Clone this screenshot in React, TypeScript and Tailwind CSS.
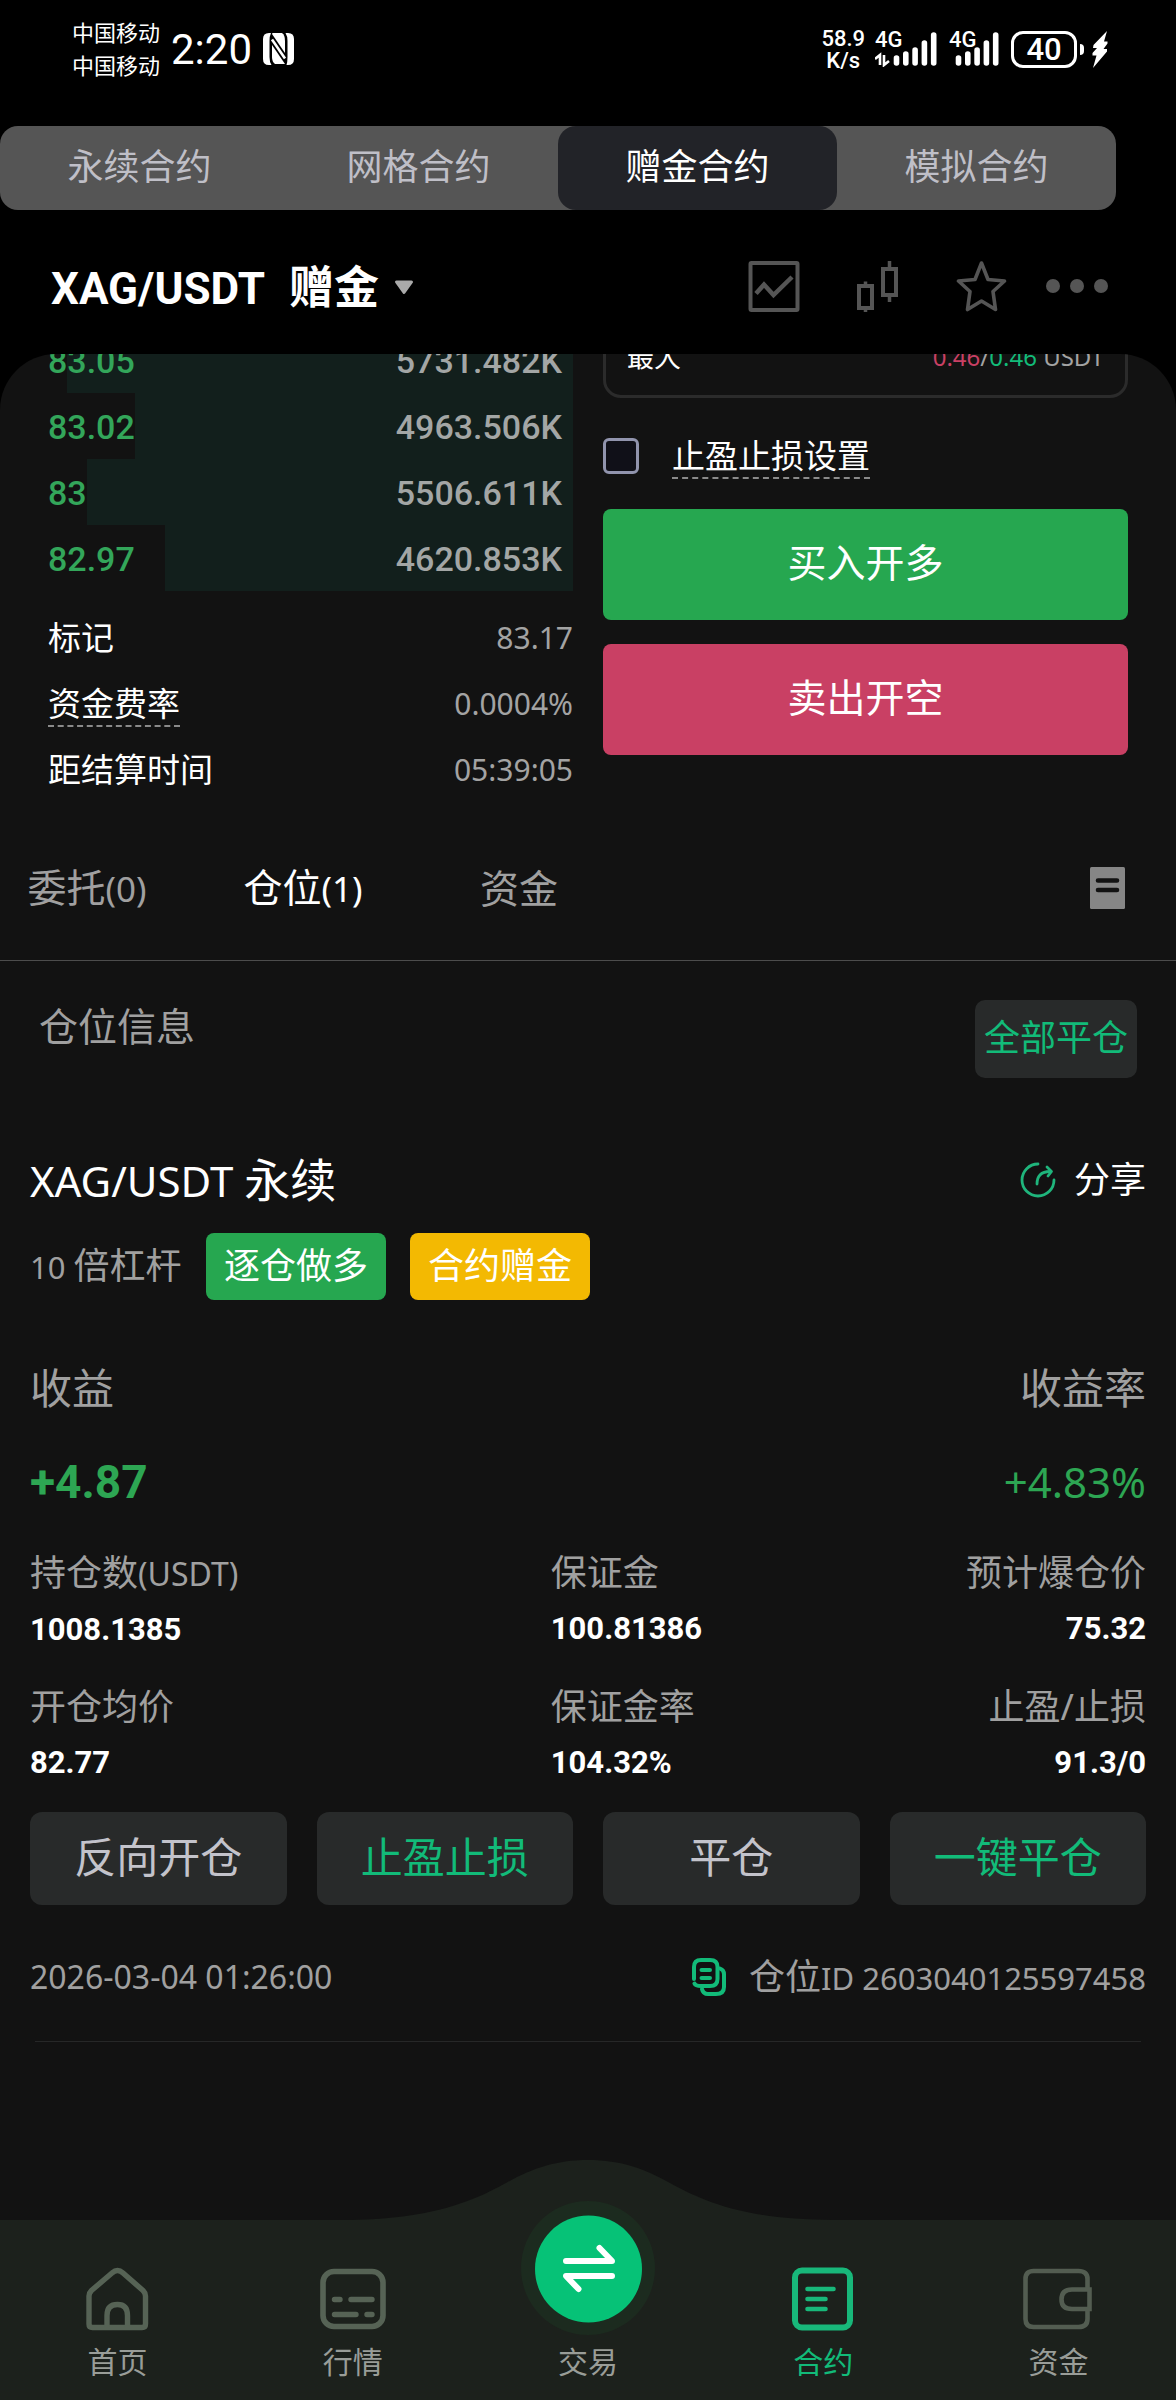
import React from "react";

const modes = ["永续合约", "网格合约", "赠金合约", "模拟合约"];

const bids = [
  { price: "83.05", size: "5731.482K", depth: 506 },
  { price: "83.02", size: "4963.506K", depth: 438 },
  { price: "83", size: "5506.611K", depth: 486 },
  { price: "82.97", size: "4620.853K", depth: 408 },
];
const MAX_DEPTH = 525;

const actions = [
  { label: "反向开仓", accent: false },
  { label: "止盈止损", accent: true },
  { label: "平仓", accent: false },
  { label: "一键平仓", accent: true },
];

function Signal({ traffic }: { traffic?: boolean }) {
  const tops = [23, 19, 15, 8, 0];
  return (
    <div className={traffic ? "relative h-[36px] w-[62px]" : "relative h-[36px] w-[50px]"}>
      <span className="absolute -top-[3px] left-0 font-[Roboto] text-[22px] leading-[24px] font-medium">4G</span>
      <svg className="absolute right-0 bottom-0" width="62" height="36" viewBox="0 0 62 36" aria-hidden="true">
        {tops.map((top, i) => (
          <path key={i} d={`M${21.5 + i * 9.3} ${top + 4}V32`} stroke="#fff" strokeWidth="5.6" strokeLinecap="round" />
        ))}
        {traffic && (
          <path d="M0 28l5-4v10M14 30l-5 4V24" stroke="#fff" strokeWidth="2.6" fill="none" />
        )}
      </svg>
    </div>
  );
}

function StatusBar() {
  return (
    <div className="flex h-[98px] items-center justify-between pr-[68px] pl-[72px]">
      <div className="flex items-center">
        <div className="pb-[1px] text-[22px] leading-[33px]">
          <div>中国移动</div>
          <div>中国移动</div>
        </div>
        <span className="ml-[11px] pt-[1px] font-[Roboto] text-[42px] leading-[48px]">2:20</span>
        <svg className="ml-[11px]" width="31" height="32" viewBox="0 0 31 32" aria-label="NFC">
          <path d="M6 0H8Q6.500 3 6.500 8V24Q6.500 29 8.500 32H6Q0 32 0 26V6Q0 0 6 0Z" fill="#fff" />
          <path d="M25 0H22.500Q24.500 3 24.500 8V24Q24.500 29 23.500 32H25Q31 32 31 26V6Q31 0 25 0Z" fill="#fff" />
          <path d="M9.500 0H19Q22 2 22 8V20L9 1Z" fill="#fff" />
          <path d="M9 12L22 31H12Q9 29 9 24Z" fill="#fff" />
          <path d="M9 6.500L22 25.500" stroke="#fff" strokeWidth="2.600" />
        </svg>
      </div>
      <div className="flex items-center">
        <div className="mr-[10px] pt-[2px] text-center font-[Roboto] text-[22px] leading-[22px] font-medium">
          <div>58.9</div>
          <div>K/s</div>
        </div>
        <Signal traffic />
        <div className="ml-[12px]">
          <Signal />
        </div>
        <div className="ml-[12px] flex h-[37px] w-[66px] items-center justify-center rounded-[12px] border-3 border-white font-[Roboto] text-[31px] leading-none font-medium">
          40
        </div>
        <div className="ml-[3px] h-[11px] w-[4px] rounded-r-[4px] bg-white" />
        <svg className="ml-[8px]" width="16" height="37" viewBox="0 0 16 37" aria-label="充电中">
          <path d="M15 0L1.500 14L1 17H5L0.500 22V24.500H4.500L1 37L15 20.500V18H11.500L15.500 12.500V10.500H12Z" fill="#fff" />
        </svg>
      </div>
    </div>
  );
}

function PairHeader() {
  return (
    <div className="flex h-[144px] items-center justify-between pt-[10px] pr-[68px] pl-[51px]">
      <button className="flex items-center">
        <span className="pt-[3px] font-[Roboto] text-[44px] leading-[56px] font-bold">XAG/USDT</span>
        <span className="ml-[24px] text-[45px] leading-[56px] font-bold">赠金</span>
        <svg className="ml-[15px]" width="20" height="15" viewBox="0 0 20 15" aria-hidden="true">
          <path d="M2.500 2H17.500L10 12.500Z" fill="#aaa" stroke="#aaa" strokeWidth="3" strokeLinejoin="round" />
        </svg>
      </button>
      <div className="flex items-center text-[#555555]">
        <div className="flex gap-[52px]">
          <button aria-label="走势">
            <svg width="52" height="52" viewBox="0 0 52 52" fill="none" stroke="currentColor" strokeWidth="4">
              <rect x="2.500" y="2" width="47" height="47" rx="1" />
              <path d="M8 32.500L16 23.500L25.500 34L44 16" strokeWidth="4.500" />
            </svg>
          </button>
          <button aria-label="K线">
            <svg width="52" height="52" viewBox="0 0 52 52" fill="none" stroke="currentColor" strokeWidth="4">
              <rect x="7" y="25" width="13" height="22" />
              <rect x="31" y="8" width="13" height="26" />
              <path d="M13.500 20.500V24M13.500 47V51M37.500 0V7M37.500 35V41" strokeWidth="3.500" />
            </svg>
          </button>
          <button aria-label="收藏">
            <svg width="52" height="52" viewBox="0 0 52 52" fill="none" stroke="currentColor" strokeWidth="3.600" strokeLinejoin="round">
              <path d="M25.500 2L32 18.500L48.500 20L37 30.500L39.500 48.500L25.500 40L11.500 48.500L14 30.500L2.500 20L19 18.500Z" />
            </svg>
          </button>
        </div>
        <button aria-label="更多" className="ml-[38px]">
          <svg width="62" height="16" viewBox="0 0 62 16" fill="currentColor">
            <circle cx="7" cy="7" r="7" />
            <circle cx="31" cy="7" r="7" />
            <circle cx="55" cy="7" r="7" />
          </svg>
        </button>
      </div>
    </div>
  );
}

function OrderBook() {
  return (
    <div className="-mt-[27px] min-w-0 flex-1">
      <table className="w-full border-collapse font-[Roboto] text-[34px] leading-[64px] font-medium">
        <tbody>
          {bids.map((b) => {
            const pct = (b.depth / MAX_DEPTH) * 100;
            return (
              <tr
                key={b.price}
                className="h-[66px]"
                style={{ background: `linear-gradient(to left, #121f1c ${pct}%, transparent ${pct}%)` }}
              >
                <td className="p-0 pt-[2px] text-left text-[#33a65a]">{b.price}</td>
                <td className="p-0 pt-[2px] pr-[11px] text-right text-[#a3a6a5]">{b.size}</td>
              </tr>
            );
          })}
        </tbody>
      </table>
      <dl className="pt-[14px] text-[33px] leading-[36px]">
        <div className="flex h-[66px] items-start justify-between pt-[15px]">
          <dt>标记</dt>
          <dd className="text-[30px] text-[#a3a3a3]">83.17</dd>
        </div>
        <div className="flex h-[66px] items-start justify-between pt-[15px]">
          <dt className="border-b-2 border-dashed border-[#8a8a8a] pb-[3px]">资金费率</dt>
          <dd className="text-[30px] text-[#a3a3a3]">0.0004%</dd>
        </div>
        <div className="flex h-[66px] items-start justify-between pt-[15px]">
          <dt>距结算时间</dt>
          <dd className="text-[30px] text-[#a3a3a3]">05:39:05</dd>
        </div>
      </dl>
    </div>
  );
}

function TradeForm() {
  return (
    <form className="-mt-[40px] min-w-0 flex-1" onSubmit={(e) => e.preventDefault()}>
      <div className="flex h-[84px] items-center justify-between rounded-[18px] border-3 border-[#2b2b2b] px-[21px] pt-[2px] leading-[32px]">
        <span className="text-[27px]">最大</span>
        <span className="text-[24px] text-[#a3a3a3]">
          <span className="text-[#c94064]">0.46</span>/<span className="text-[#12bb79]">0.46</span> USDT
        </span>
      </div>
      <div className="mt-[40px] flex h-[71px] items-start">
        <input
          id="tpsl"
          type="checkbox"
          className="size-[36px] appearance-none rounded-[6px] border-3 border-[#9194ad] bg-[#101018] checked:bg-[#9194ad]"
        />
        <label
          htmlFor="tpsl"
          className="ml-[33px] border-b-2 border-dashed border-[#8a8a8a] pb-[3px] text-[33px] leading-[36px]"
        >
          止盈止损设置
        </label>
      </div>
      <button className="block h-[111px] w-full rounded-[8px] bg-[#26a750] pb-[4px] text-[39px]">买入开多</button>
      <button className="mt-[24px] block h-[111px] w-full rounded-[8px] bg-[#c94064] pb-[4px] text-[39px]">
        卖出开空
      </button>
    </form>
  );
}

function Tabs() {
  return (
    <div className="flex h-[158px] items-center justify-between border-b border-[#4c4c4c] pt-[13px] pr-[51px]">
      <div className="-ml-[21px] flex text-[39px] leading-[48px]">
        <button className="w-[216px] text-[#a0a0a0]">
          委托<span className="text-[35px]">(0)</span>
        </button>
        <button className="w-[216px] text-white">
          仓位<span className="text-[35px]">(1)</span>
        </button>
        <button className="w-[216px] text-[#a0a0a0]">资金</button>
      </div>
      <button aria-label="历史记录">
        <svg width="35" height="42" viewBox="0 0 35 42">
          <rect width="35" height="42" rx="1.500" fill="#868686" />
          <path d="M8 13.500H27M8 23H27" stroke="#121212" strokeWidth="4.600" strokeLinecap="round" />
        </svg>
      </button>
    </div>
  );
}

function Metric({ label, unit, value, end }: { label: string; unit?: string; value: string; end?: boolean }) {
  return (
    <div className={end ? "text-right" : ""}>
      <dt className="text-[36px] leading-[44px] whitespace-nowrap text-[#a0a0a0]">
        {label}
        {unit && <span className="text-[32px]">{unit}</span>}
      </dt>
      <dd className="mt-[12px] font-[Roboto] text-[31px] leading-[44px] font-bold text-white">{value}</dd>
    </div>
  );
}

function Position() {
  return (
    <article className="mt-[74px] px-[30px]">
      <div className="flex h-[56px] items-center justify-between">
        <h2 className="flex items-baseline gap-[11px] text-[46px] leading-[56px]">
          <span className="text-[42px]">XAG/USDT</span>
          <span>永续</span>
        </h2>
        <button className="flex items-center text-[36px] leading-[48px]">
          <svg className="mr-[18px]" width="36" height="36" viewBox="0 0 36 36" fill="none" stroke="#1fb57c" strokeWidth="2.800" strokeLinecap="round" strokeLinejoin="round">
            <path d="M18 2A16 16 0 1 0 34 18" />
            <path d="M17 22C17 14 21 9.500 30 9.500" />
            <path d="M27 5L31.500 9.500L28 14" />
          </svg>
          分享
        </button>
      </div>
      <div className="mt-[25px] flex h-[67px] items-stretch text-[36px] leading-[65px]">
        <span className="w-[176px] whitespace-nowrap text-[#a0a0a0]">
          <span className="text-[31px]">10 </span>倍杠杆
        </span>
        <span className="rounded-[8px] bg-[#26a750] px-[18px]">逐仓做多</span>
        <span className="ml-[24px] rounded-[8px] bg-[#f3b902] px-[18px]">合约赠金</span>
      </div>
      <dl className="mt-[63px] flex justify-between leading-[50px]">
        <div>
          <dt className="text-[42px] text-[#a0a0a0]">收益</dt>
          <dd className="mt-[44px] font-[Roboto] text-[46px] font-bold text-[#2da653]">+4.87</dd>
        </div>
        <div className="text-right">
          <dt className="text-[42px] text-[#a0a0a0]">收益率</dt>
          <dd className="mt-[44px] text-[42px] text-[#2da653]">+4.83%</dd>
        </div>
      </dl>
      <dl className="mt-[44px] grid grid-cols-[14fr_8fr_8fr] gap-y-[33px]">
        <Metric label="持仓数" unit="(USDT)" value="1008.1385" />
        <Metric label="保证金" value="100.81386" />
        <Metric label="预计爆仓价" value="75.32" end />
        <Metric label="开仓均价" value="82.77" />
        <Metric label="保证金率" value="104.32%" />
        <Metric label="止盈/止损" value="91.3/0" end />
      </dl>
      <div className="mt-[27px] grid grid-cols-4 gap-[30px]">
        {actions.map((a) => (
          <button
            key={a.label}
            className={
              a.accent
                ? "h-[93px] rounded-[12px] bg-[#282a2a] pb-[5px] text-[42px] text-[#12bb79]"
                : "h-[93px] rounded-[12px] bg-[#282a2a] pb-[5px] text-[42px] text-[#c3c3cb]"
            }
          >
            {a.label}
          </button>
        ))}
      </div>
      <div className="mt-[50px] flex h-[44px] items-center justify-between text-[32px] leading-[44px] text-[#a0a0a0]">
        <time>2026-03-04 01:26:00</time>
        <div className="flex items-center text-[31px]">
          <button aria-label="复制">
            <svg width="34" height="38" viewBox="0 0 34 38" fill="none" stroke="#12bb79" strokeWidth="4" strokeLinecap="round">
              <path d="M2 21V9Q2 2 9 2H18Q25.500 2 25.500 9V21Q25.500 28 18 28H9Q3.500 28 2.500 25.500" />
              <path d="M10 31Q11 36 16 36H24Q32 36 32 29V16Q32 12 28 10.500" />
              <path d="M9.500 12H18M9.500 20H18" />
            </svg>
          </button>
          <span className="ml-[23px]">
            <span className="text-[36px]">仓位</span>ID 2603040125597458
          </span>
        </div>
      </div>
      <hr className="mx-[5px] mt-[42px] border-[#262727]" />
    </article>
  );
}

function NavItem({ label, active, children }: { label: string; active?: boolean; children?: React.ReactNode }) {
  return (
    <a
      href="#"
      className={
        active
          ? "flex flex-1 flex-col items-center pt-[46px] text-[#12bb79]"
          : "flex flex-1 flex-col items-center pt-[46px] text-[#999d98]"
      }
    >
      <span className="relative flex h-[68px] w-[72px] justify-center">{children}</span>
      <span className="mt-[8px] text-[30px] leading-[39px]">{label}</span>
    </a>
  );
}

function BottomNav() {
  return (
    <nav className="relative flex h-[180px] bg-[#1c211c]">
      <svg className="absolute bottom-full left-1/2 -translate-x-1/2" width="490" height="60" viewBox="0 0 490 60" aria-hidden="true">
        <path d="M0 60C95 60 137 37 163 23C188 9 212 0 245 0C278 0 302 9 327 23C353 37 395 60 490 60Z" fill="#1c211c" />
      </svg>
      <NavItem label="首页">
        <svg width="72" height="68" viewBox="0 0 72 68" fill="none" stroke="#566355" strokeWidth="5.400">
          <path d="M30 7Q35.500 2 41 7L61 24.500Q63.500 27 63.500 30V58Q63.500 61.500 60 61.500H10.500Q7 61.500 7 58V30Q7 27 9.500 24.500Z" strokeLinejoin="round" />
          <path d="M25 61V49.500Q25 38.500 35.500 38.500Q45.500 38.500 45.500 49.500V61" />
        </svg>
      </NavItem>
      <NavItem label="行情">
        <svg width="72" height="68" viewBox="0 0 72 68" fill="none" stroke="#566355" strokeWidth="5.600" strokeLinecap="round">
          <rect x="6" y="5.500" width="60" height="55" rx="11" />
          <path d="M17.500 33.500H23M34 33.500H55M17.500 48.500H39M50 48.500H55" strokeWidth="5.400" />
        </svg>
      </NavItem>
      <NavItem label="交易">
        <svg className="absolute -top-[65px] -left-[31px]" width="134" height="134" viewBox="0 0 134 134" fill="none">
          <circle cx="67" cy="67" r="67" fill="#1c2b1f" />
          <circle cx="67.500" cy="68" r="53.500" fill="#06c277" />
          <path d="M45 60H91L78.500 47M91 75H45L57.500 88" stroke="#fff" strokeWidth="6" strokeLinecap="round" strokeLinejoin="round" />
        </svg>
      </NavItem>
      <NavItem label="合约" active>
        <svg width="72" height="68" viewBox="0 0 72 68" fill="none" stroke="#18b87a" strokeWidth="6" strokeLinecap="round">
          <rect x="8" y="4.500" width="55" height="57" rx="7" />
          <path d="M20.500 23H46.500M20.500 33H38.500M20.500 43H38.500" strokeWidth="4.600" />
        </svg>
      </NavItem>
      <NavItem label="资金">
        <svg width="72" height="68" viewBox="0 0 72 68" fill="none" stroke="#535d51" strokeWidth="4.600">
          <path d="M65.500 24V13Q65.500 5 56.500 5H11.500Q3.500 5 3.500 13V53Q3.500 61 11.500 61H56.500Q65.500 61 65.500 53V43" />
          <path d="M67.500 23.500H50Q39.500 23.500 39.500 33.500Q39.500 43 50 43H67.500Z" />
        </svg>
      </NavItem>
    </nav>
  );
}

export default function App() {
  return (
    <div className="flex min-h-screen flex-col overflow-hidden bg-black font-['Noto_Sans','Noto_Sans_CJK_SC',sans-serif] text-white">
      <header>
        <StatusBar />
        <div className="mt-[28px] mr-[60px] flex h-[84px] rounded-[18px] bg-[#555555]">
          {modes.map((m) => (
            <button
              key={m}
              className={
                m === "赠金合约"
                  ? "flex-1 rounded-[18px] bg-[#222328] pb-[3px] text-[36px] text-white"
                  : "flex-1 pb-[3px] text-[36px] text-[#bfbfc7]"
              }
            >
              {m}
            </button>
          ))}
        </div>
        <PairHeader />
      </header>
      <main className="flex-1 overflow-hidden rounded-t-[56px] bg-[#121212]">
        <section className="flex gap-[30px] px-[48px]">
          <OrderBook />
          <TradeForm />
        </section>
        <Tabs />
        <section>
          <div className="flex items-start justify-between px-[39px] pt-[39px]">
            <h1 className="text-[39px] leading-[52px] text-[#a0a0a0]">仓位信息</h1>
            <button className="h-[78px] rounded-[10px] bg-[#282a2a] px-[9px] pb-[2px] text-[36px] text-[#12bb79]">
              全部平仓
            </button>
          </div>
          <Position />
        </section>
      </main>
      <BottomNav />
    </div>
  );
}
